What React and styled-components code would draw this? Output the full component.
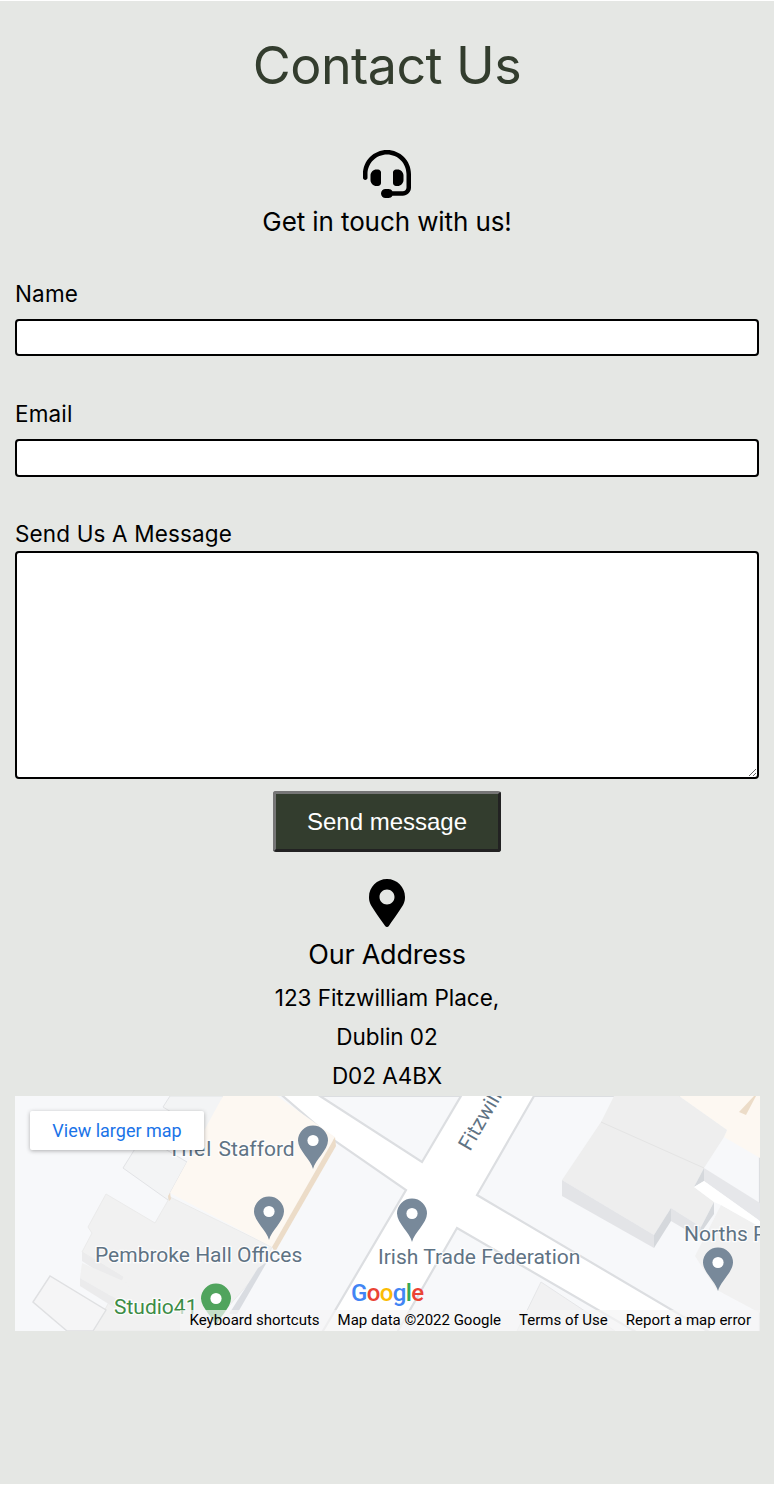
import React from "react";
import styled, { createGlobalStyle } from "styled-components";
import { FaMapMarkerAlt } from "react-icons/fa";
import { FaHeadset } from "react-icons/fa6";

const Global = createGlobalStyle`
  html, body { margin: 0; padding: 0; background: #fff; }
  * { box-sizing: border-box; }
`;
const FONT = `"Inter", "Liberation Sans", sans-serif`;

const Page = styled.main`
  width: 774px;
  height: 1483px;
  margin-top: 1px;
  background: #e5e7e4;
  padding: 0 15px;
  font-family: ${FONT};
  color: #000;
  display: flex;
  flex-direction: column;
`;
const Title = styled.h1`
  margin: 35px 0 0;
  height: 60px;
  font-size: 52px;
  line-height: 60px;
  font-weight: 400;
  letter-spacing: -0.55px;
  text-align: center;
  color: #333d2e;
`;
const Intro = styled.section`
  margin-top: 54px;
  display: flex;
  flex-direction: column;
  align-items: center;
  font-size: 48px;
  height: 87px;
`;
const IntroText = styled.h2`
  margin: 9px 0 0;
  font-size: 26px;
  line-height: 30px;
  font-weight: 400;
  letter-spacing: -0.1px;
`;
const Form = styled.form`
  display: flex;
  flex-direction: column;
  margin-top: 43px;
`;
const Field = styled.div`
  display: flex;
  flex-direction: column;
  height: ${(p) => p.$h}px;
`;
const Label = styled.label`
  font-size: 22.5px;
  line-height: 27px;
  height: ${(p) => p.$h || 39}px;
  letter-spacing: 0.15px;
`;
const Input = styled.input`
  width: 744px;
  height: ${(p) => p.$h}px;
  border: 2px solid #000;
  border-radius: 4px;
  background: #fff;
`;
const TextArea = styled.textarea`
  width: 744px;
  height: 228px;
  border: 2px solid #000;
  border-radius: 4px;
  background: #fff;
  display: block;
`;
const SendButton = styled.button`
  align-self: center;
  width: 228px;
  height: 61px;
  margin-top: 12px;
  background: #333d2e;
  color: #fff;
  font-family: "Liberation Sans", Arial, sans-serif;
  font-size: 24px;
  border-width: 3px;
  border-style: solid;
  border-color: #767676 #222 #222 #767676;
  border-radius: 3px;
`;
const Address = styled.address`
  font-style: normal;
  display: flex;
  flex-direction: column;
  align-items: center;
  margin-top: 27px;
  font-size: 48px;
`;
const PinIcon = styled(FaMapMarkerAlt)`
  display: block;
  width: 36px;
  height: 48px;
`;
const AddressTitle = styled.h3`
  margin: 12px 0 0;
  font-size: 27px;
  line-height: 32px;
  font-weight: 400;
  letter-spacing: -0.25px;
`;
const AddressLine = styled.p`
  margin: 0;
  font-size: 22.5px;
  line-height: 39px;
  letter-spacing: -0.05px;
  &:first-of-type { margin-top: 7px; }
`;
const MapFrame = styled.figure`
  position: relative;
  margin: 1px 0 0;
  width: 745px;
  height: 235px;
  overflow: hidden;
  background: #f7f8fa;
`;
const MapArt = styled.svg`
  display: block;
  width: 745px;
  height: 235px;
`;
const LargerMap = styled.a`
  position: absolute;
  left: 15px;
  top: 15px;
  width: 174px;
  height: 39px;
  background: #fff;
  border-radius: 2px;
  box-shadow: 0 1px 4px rgba(0,0,0,.3);
  color: #1a73e8;
  font: 400 18px/39px Roboto, sans-serif;
  text-align: center;
`;
const Attribution = styled.div`
  position: absolute;
  right: 0;
  bottom: 0;
  height: 21px;
  display: flex;
`;
const AttrItem = styled.span`
  background: rgba(245,245,245,.7);
  font: 400 15px/21px Roboto, sans-serif;
  color: #000;
  padding: 0 9px;
  white-space: nowrap;
`;
const GoogleLogo = styled.span`
  position: absolute;
  left: 336px;
  top: 181px;
  font: 500 24px/32px Roboto, sans-serif;
  letter-spacing: -0.6px;
`;
const LogoLetter = styled.span`
  color: ${(p) => p.$c};
`;

const MapLabel = styled.text`
  font-family: Roboto, sans-serif;
  font-size: 21px;
  fill: ${(p) => p.$c || "#5f7384"};
  stroke: rgba(255,255,255,.85);
  stroke-width: 2.5px;
  paint-order: stroke;
`;

const Pin = ({ x, y, c = "#78899a" }) => (
  <g transform={`translate(${x} ${y})`}>
    <path d="M0 43C-2 34 -15 24 -15 14.5A15 15 0 0 1 15 14.5C15 24 2 34 0 43Z" fill={c} />
    <circle cx="0" cy="14.5" r="5.6" fill="#fff" />
  </g>
);

const BLOCK = { fill: "#f7f8fa", stroke: "#dcdee1", strokeWidth: 2.2 };
const BUILDING = { fill: "#f3f4f5", stroke: "#e2e3e6", strokeWidth: 1 };

const MapDrawing = () => (
  <MapArt viewBox="0 0 745 235">
    <rect width="745" height="235" fill="#fff" />
    {/* street blocks */}
    <polygon points="305,0 407,66 446,0" {...BLOCK} />
    <polygon points="519,0 462,99 745,266 745,0" {...BLOCK} />
    <polygon points="-5,-5 262,-5 320,45 391,94 305,240 -5,240" {...BLOCK} />
    <polygon points="442,132 380,240 628,240" {...BLOCK} />
    <polygon points="526,186 502,235 600,235" fill="#f1f1f2" stroke="#e5e6e8" />
    {/* buildings, upper left */}
    <polygon points="108,72 128,40 172,66 155,97 153,104" {...BUILDING} />
    <polygon points="155,0 148,11 192,38 203,22 208,0" {...BUILDING} />
    {/* office block */}
    <polygon points="155,101 257,151 248,171 192,235 78,235 108,181 67,156 77,137 73,131 91,98 140,127" fill="#f1f1f1" stroke="#ebebeb" />
    <polygon points="67,156 67,165 105,190 108,181" fill="#ebebec" />
    <polygon points="67,167 65,182 105,205 115,188" fill="#f1f1f1" />
    <polygon points="65,182 65,190 100,212 105,205" fill="#ebebec" />
    <polygon points="18,206 35,180 91,214 78,235 52,235" fill="#f5f5f6" stroke="#dfe0e2" strokeWidth="1.4" />
    {/* hotel */}
    <polygon points="208,0 262,0 320,41 257,151 155,97" fill="#fdf8f2" />
    <polygon points="320,41 321,50 260,156 257,151" fill="#ecdcc8" />
    <polygon points="155,97 156,103 154,105 153,100" fill="#ecdcc8" />
    <polygon points="243,172 252,166 222,218 214,218" fill="#d9dce1" />
    {/* buildings, right */}
    <polygon points="664,0 745,0 745,62 709,41 712,34" fill="#fdf8f2" />
    <polygon points="739,0 724,16 731,19 741,0" fill="#ecdcc8" />
    <polygon points="706,109 745,131 745,217 702,194 680,160" fill="#f1f1f1" />
    <polygon points="599,0 664,0 712,34 709,41 689,72 679,91 699,106 686,131 656,112 639,139 547,84 586,26" fill="#eeeeee" />
    <line x1="586" y1="26" x2="689" y2="72" stroke="#e4e4e4" />
    <polygon points="547,84 547,100 639,152 639,139" fill="#e3e4e7" />
    <polygon points="639,152 656,125 656,112 639,139" fill="#d5d8dc" />
    <polygon points="656,112 656,125 683,141 686,131" fill="#e3e4e7" />
    <polygon points="683,141 699,118 699,106 686,131" fill="#d5d8dc" />
    <polygon points="689,72 689,85 679,91" fill="#d5d8dc" />
    <polygon points="689,72 745,107 745,125 689,85" fill="#e6e7ea" />
    <polygon points="689,85 745,125 745,131 706,109 699,106 679,91" fill="#fff" />
    {/* pins */}
    <Pin x="298" y="30" />
    <Pin x="254" y="101" />
    <Pin x="397" y="103" />
    <Pin x="703" y="152" />
    <Pin x="201" y="188" c="#50a45d" />
    {/* labels */}
    <MapLabel x="153" y="60"><tspan letterSpacing="1">Thel </tspan>Stafford</MapLabel>
    <MapLabel x="80" y="166">Pembroke Hall Offices</MapLabel>
    <MapLabel x="363" y="168">Irish Trade Federation</MapLabel>
    <MapLabel x="669" y="145">Norths Par</MapLabel>
    <MapLabel x="99" y="218" $c="#3c8c46">Studio41</MapLabel>
    <MapLabel x="455" y="56" transform="rotate(-60 455 56)">Fitzwilliam</MapLabel>
  </MapArt>
);

export default function App() {
  return (
    <Page>
      <Global />
      <Title>Contact Us</Title>
      <Intro>
        <FaHeadset />
        <IntroText>Get in touch with us!</IntroText>
      </Intro>
      <Form>
        <Field $h={120}>
          <Label>Name</Label>
          <Input $h={37} />
        </Field>
        <Field $h={120}>
          <Label>Email</Label>
          <Input $h={38} />
        </Field>
        <Field $h={259}>
          <Label $h={31}>Send Us A Message</Label>
          <TextArea />
        </Field>
        <SendButton type="button">Send message</SendButton>
      </Form>
      <Address>
        <PinIcon />
        <AddressTitle>Our Address</AddressTitle>
        <AddressLine>123 Fitzwilliam Place,</AddressLine>
        <AddressLine>Dublin 02</AddressLine>
        <AddressLine>D02 A4BX</AddressLine>
      </Address>
      <MapFrame>
        <MapDrawing />
        <LargerMap>View larger map</LargerMap>
        <GoogleLogo>
          <LogoLetter $c="#4285f4">G</LogoLetter>
          <LogoLetter $c="#ea4335">o</LogoLetter>
          <LogoLetter $c="#fbbc05">o</LogoLetter>
          <LogoLetter $c="#4285f4">g</LogoLetter>
          <LogoLetter $c="#34a853">l</LogoLetter>
          <LogoLetter $c="#ea4335">e</LogoLetter>
        </GoogleLogo>
        <Attribution>
          <AttrItem>Keyboard shortcuts</AttrItem>
          <AttrItem>Map data ©2022 Google</AttrItem>
          <AttrItem>Terms of Use</AttrItem>
          <AttrItem>Report a map error</AttrItem>
        </Attribution>
      </MapFrame>
    </Page>
  );
}
